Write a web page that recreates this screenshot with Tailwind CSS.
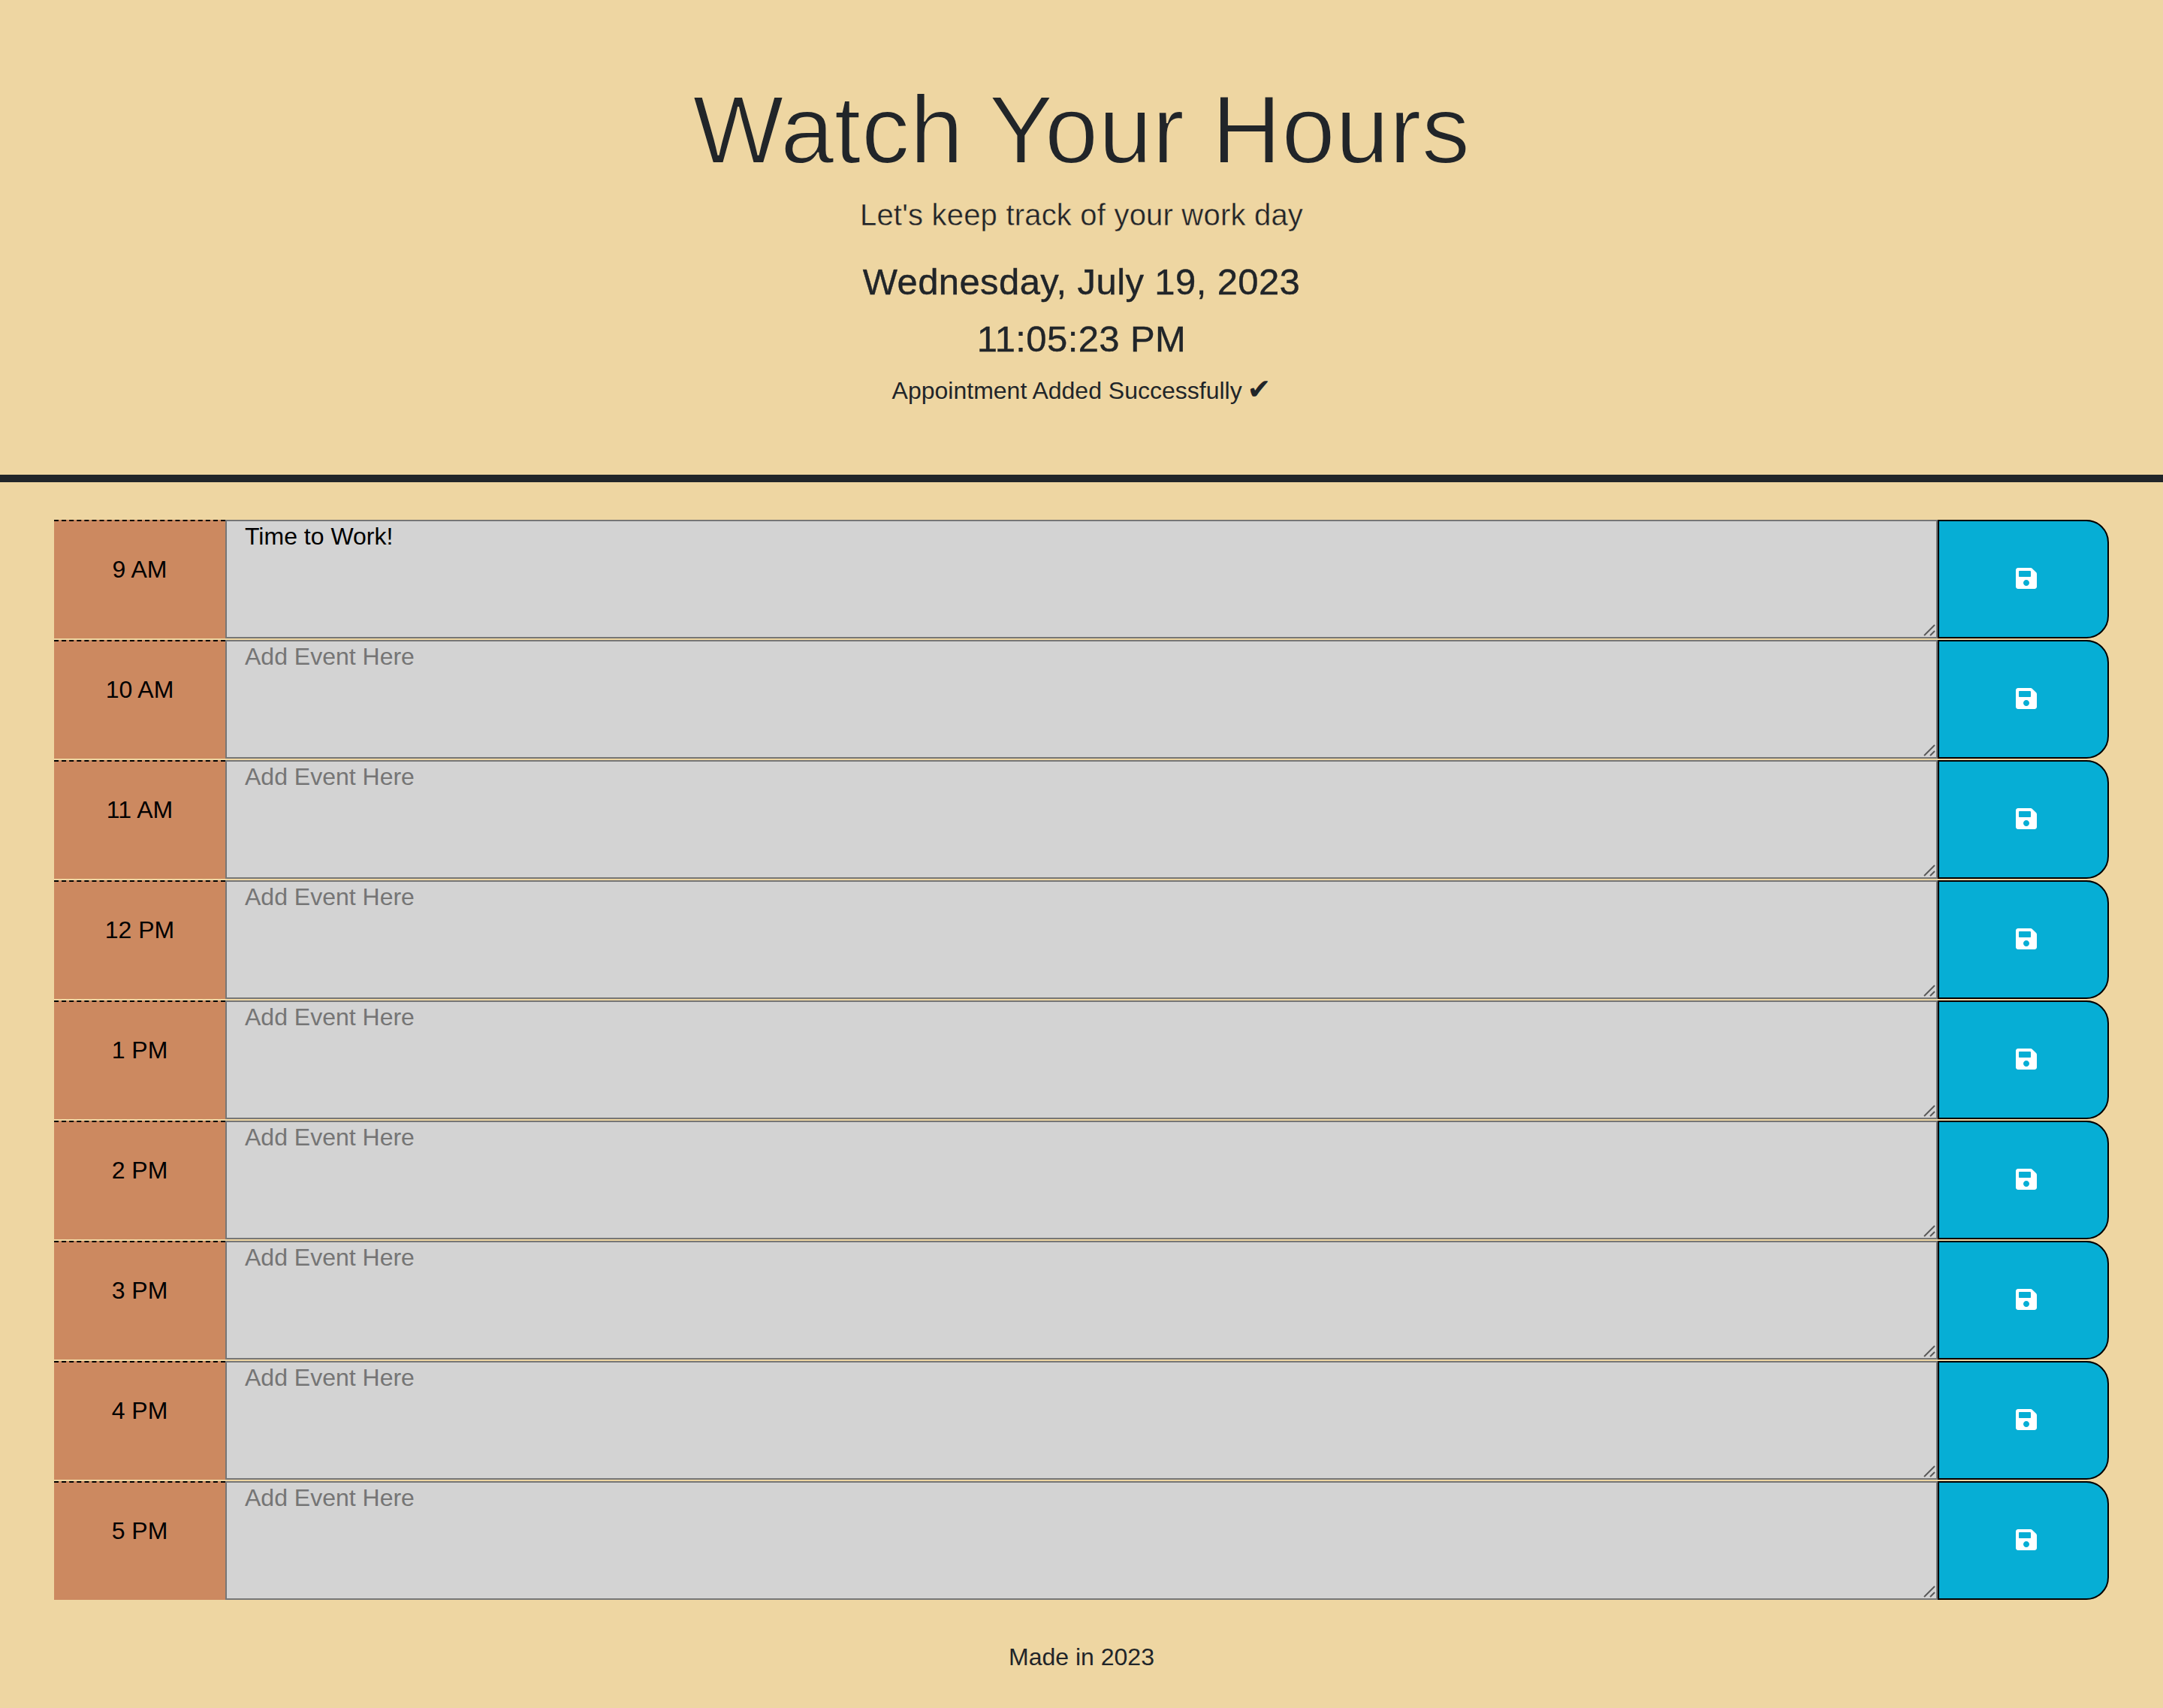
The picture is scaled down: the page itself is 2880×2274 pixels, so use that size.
<!DOCTYPE html>
<html lang="en">
<head>
  <meta charset="UTF-8" />
  <title>Watch Your Hours</title>
  <script src="https://cdn.jsdelivr.net/npm/@tailwindcss/browser@4"></script>
</head>
<body class="bg-[#eed6a2] text-[#212529] font-['Liberation_Sans','DejaVu_Sans',sans-serif] min-h-screen">

<header class="h-[642px] border-b-[10px] border-[#212529] flex flex-col items-center pt-[96px] text-center">
  <h1 class="text-[128px] leading-[154px] tracking-[0.5px] [-webkit-text-stroke:2px_#eed6a2]">Watch Your Hours</h1>
  <p class="text-[40px] leading-[60px] mt-[6px] tracking-[0.2px] [-webkit-text-stroke:0.4px_#eed6a2]">Let's keep track of your work day</p>
  <p class="text-[49px] leading-[72px] mt-[23px] tracking-[0.4px] [-webkit-text-stroke:0.4px_#212529]">Wednesday, July 19, 2023</p>
  <p class="text-[49px] leading-[72px] mt-[4px] tracking-[0.4px] [-webkit-text-stroke:0.4px_#212529]">11:05:23 PM</p>
  <p class="text-[32px] leading-[48px] mt-[9px]">Appointment Added Successfully <span class="text-[38px] leading-[38px] ml-[-2px]">✔</span></p>
</header>

<main id="planner" class="mx-[72px] mt-[50px] flex flex-col gap-[2px]"></main>

<footer class="text-center text-[32px] leading-[48px] mt-[52px]">Made in 2023</footer>

<script>
  const hours = ['9 AM', '10 AM', '11 AM', '12 PM', '1 PM', '2 PM', '3 PM', '4 PM', '5 PM'];
  const saved = { '9 AM': 'Time to Work!' };

  document.getElementById('planner').innerHTML = hours.map(hour => `
    <div class="flex h-[158px]">
      <div class="w-[228px] bg-[#cc8960] border-t-2 border-dashed border-black text-black text-center text-[32px] leading-[48px] pt-[40px]">${hour}</div>
      <div class="relative w-[2280px]">
        <textarea placeholder="Add Event Here" class="block w-full h-full resize-none border-2 border-[#767676] bg-[#d3d3d3] text-black text-[32px] leading-[37px] pt-[2px] px-[24px] placeholder:text-[#757575]">${saved[hour] || ''}</textarea>
        <svg class="absolute right-[3px] bottom-[3px]" width="16" height="16" viewBox="0 0 16 16" stroke="#5a5a5a" stroke-width="2"><path d="M1 15 15 1M9 15l6-6" /></svg>
      </div>
      <button class="w-[228px] bg-[#06aed5] border-2 border-black rounded-r-[30px] flex items-center justify-center pl-[8px] pb-[2px]">
        <svg width="28" height="32" viewBox="0 0 448 512" fill="#fff"><path d="M433.941 129.941l-83.882-83.882A48 48 0 0 0 316.118 32H48C21.49 32 0 53.49 0 80v352c0 26.51 21.49 48 48 48h352c26.51 0 48-21.49 48-48V163.882a48 48 0 0 0-14.059-33.941zM224 416c-35.346 0-64-28.654-64-64 0-35.346 28.654-64 64-64s64 28.654 64 64c0 35.346-28.654 64-64 64zm96-304.52V212c0 6.627-5.373 12-12 12H76c-6.627 0-12-5.373-12-12V108c0-6.627 5.373-12 12-12h228.52c3.183 0 6.235 1.264 8.485 3.515l3.48 3.48A11.996 11.996 0 0 1 320 111.48z" /></svg>
      </button>
    </div>`).join('');
</script>

</body>
</html>
